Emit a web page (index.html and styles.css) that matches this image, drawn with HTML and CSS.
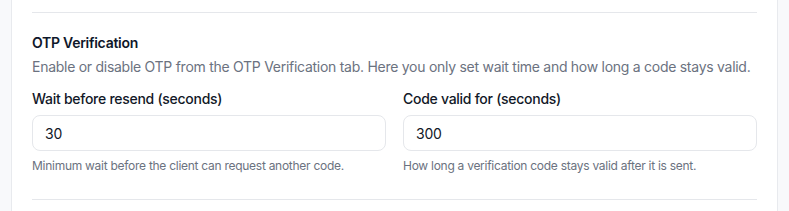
FILE: index.html
```html
<!DOCTYPE html>
<html lang="en">
<head>
<meta charset="utf-8">
<link rel="stylesheet" href="styles.css">
</head>
<body>
<div class="page">
  <div class="card">
    <div class="section">
      <h3 class="title">OTP Verification</h3>
      <p class="desc">Enable or disable OTP from the OTP Verification tab. Here you only set wait time and how long a code stays valid.</p>
      <div class="grid">
        <div class="field">
          <label class="label">Wait before resend (seconds)</label>
          <input class="input" type="text" value="30">
          <p class="help">Minimum wait before the client can request another code.</p>
        </div>
        <div class="field">
          <label class="label">Code valid for (seconds)</label>
          <input class="input" type="text" value="300">
          <p class="help">How long a verification code stays valid after it is sent.</p>
        </div>
      </div>
    </div>
  </div>
</div>
</body>
</html>
```
FILE: styles.css
```css
* { box-sizing: border-box; }
html, body { margin: 0; padding: 0; }
body {
  background: #f8f9fb;
  font-family: Inter, "Noto Sans", sans-serif;
  letter-spacing: -0.017em;
  color: #111827;
  width: 789px;
  height: 211px;
  overflow: hidden;
}
.page {
  padding: 0 11px;
  height: 211px;
}
.card {
  background: #fff;
  border-left: 1px solid #e8eaee;
  border-right: 1px solid #e8eaee;
  height: 211px;
  padding: 12px 20px 0;
}
.section {
  border-top: 1px solid #e5e7eb;
  border-bottom: 1px solid #e5e7eb;
  padding: 20px 0 25px;
}
.title {
  margin: 0;
  font-size: 14px;
  line-height: 20px;
  font-weight: 600;
  color: #0f172a;
}
.desc {
  margin: 4px 0 0;
  font-size: 14px;
  line-height: 20px;
  color: #6b7280;
}
.grid {
  margin-top: 12px;
  display: grid;
  grid-template-columns: 1fr 1fr;
  column-gap: 17px;
}
.field { display: flex; flex-direction: column; }
.label {
  font-size: 14px;
  line-height: 20px;
  font-weight: 500;
  color: #111827;
}
.input {
  margin-top: 6px;
  height: 36px;
  border: 1px solid #e5e7eb;
  border-radius: 8px;
  padding: 0 12px;
  font-family: inherit;
  letter-spacing: inherit;
  font-size: 14px;
  color: #111827;
  background: #fff;
  outline: none;
}
.help {
  margin: 7px 0 0;
  font-size: 12px;
  line-height: 16px;
  color: #6b7280;
}
```
